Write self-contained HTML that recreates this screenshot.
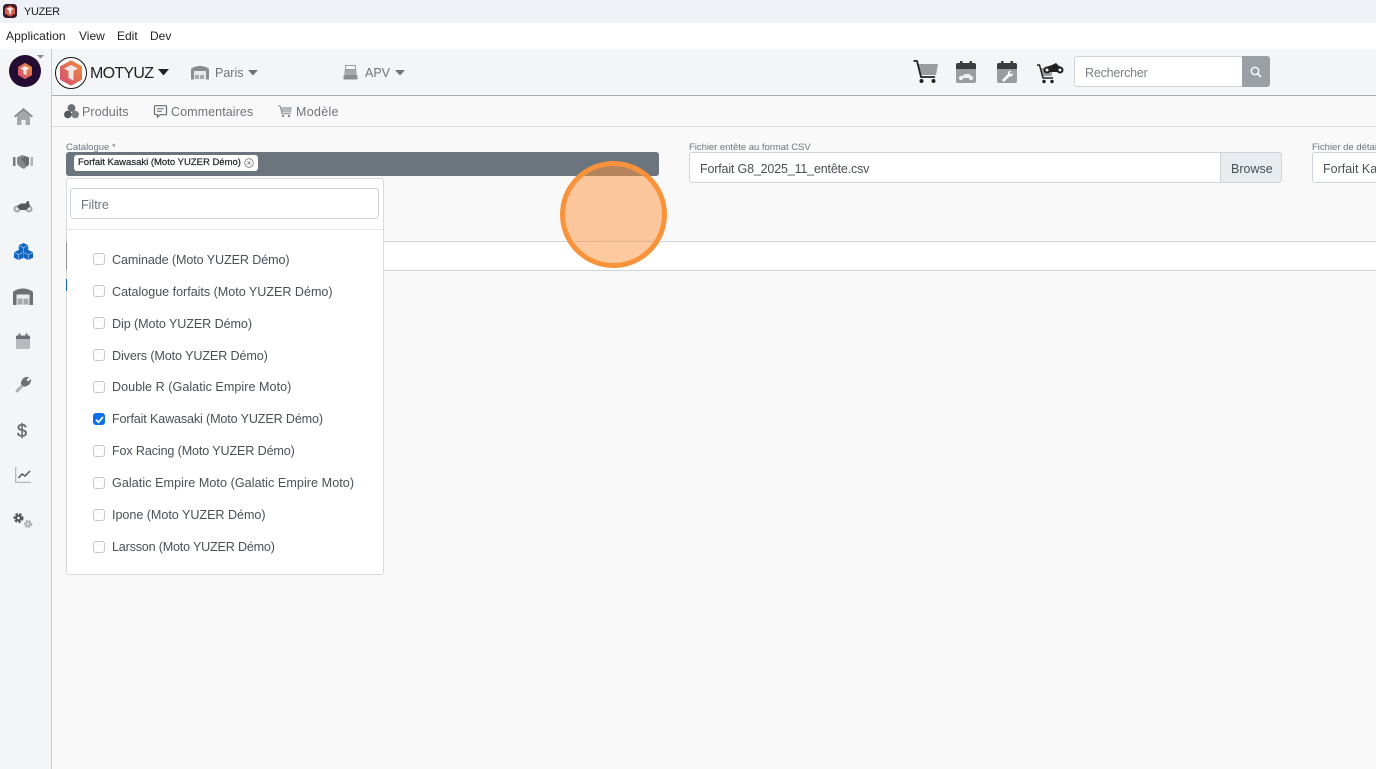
<!DOCTYPE html>
<html lang="fr"><head><meta charset="utf-8"><title>YUZER</title>
<style>
html,body{margin:0;padding:0;width:1376px;height:769px;overflow:hidden;background:#f9f9fa;font-family:"Liberation Sans",sans-serif;color:#495057}
.a{position:absolute;white-space:nowrap}
svg{position:absolute;overflow:visible}
.cb{position:absolute;left:93px;width:10px;height:10px;border:1px solid #c6c8ca;border-radius:3px;background:#fff}
.it{position:absolute;left:112px;font-size:12.6px;line-height:16px;color:#495057;white-space:nowrap}
</style></head><body>
<div class="a" style="left:0;top:0;width:1376px;height:23px;background:#eef2f6"></div>
<svg style="left:2px;top:3px" width="16" height="16" viewBox="0 0 16 16"><rect x="1" y="1" width="14" height="14" rx="3.500" fill="#3a1a28"/><path d="M8 2.500l5 2.700v5.600l-5 2.700-5-2.700V5.200z" fill="#d9604f"/><path d="M4.500 5.800L8 4.200l3.500 1.600L9 7.800v3.500l-2-1V7.800z" fill="#f5e8e6"/></svg>
<div class="a" style="left:24px;top:5px;font-size:11px;letter-spacing:-.3px;line-height:15px;color:#1a1a1a">YUZER</div>
<div class="a" style="left:0;top:23px;width:1376px;height:26px;background:#fff"></div>
<div class="a" style="left:6px;top:29px;font-size:12px;letter-spacing:.08px;line-height:15px;color:#222">Application</div>
<div class="a" style="left:79px;top:29px;font-size:12px;line-height:15px;color:#222">View</div>
<div class="a" style="left:117px;top:29px;font-size:12px;line-height:15px;color:#222">Edit</div>
<div class="a" style="left:150px;top:29px;font-size:12px;line-height:15px;color:#222">Dev</div>

<div class="a" style="left:0;top:49px;width:1376px;height:46px;background:#f4f5f7;border-bottom:1px solid #a9acaf;box-shadow:0 1px 1px #ddd"></div>
<div class="a" style="left:0;top:49px;width:51px;height:720px;background:#f4f5f7;border-right:1px solid #c9cbce"></div>
<div class="a" style="left:52px;top:96px;width:1324px;height:30px;background:#f9f9fa;border-bottom:1px solid #dcdee0"></div>

<svg style="left:9px;top:55px" width="33" height="33" viewBox="0 0 33 33"><defs><linearGradient id="g1" x1="0" y1="1" x2="1" y2="0"><stop offset="0" stop-color="#d64f72"/><stop offset="1" stop-color="#ea8a3c"/></linearGradient></defs><circle cx="16" cy="16" r="16" fill="#250c33"/><path d="M16 9l6 3.500v7L16 23l-6-3.500v-7z" fill="url(#g1)" stroke="url(#g1)" stroke-width="2" stroke-linejoin="round"/><path d="M11.500 13.500L16 11l4.500 2.500-3 1.800v5l-3-1.500v-3.500z" fill="#f5e8e6"/></svg>
<svg style="left:37px;top:55px" width="8" height="4" viewBox="0 0 8 4"><path d="M0 0h7L3.500 3.500z" fill="#888"/></svg>
<svg style="left:55px;top:57px" width="33" height="33" viewBox="0 0 33 33"><circle cx="16" cy="16" r="15.500" fill="#fff" stroke="#111" stroke-width="1"/><path d="M16 5l9.500 5.200v11.600L16 27l-9.500-5.200V10.200z" fill="url(#g1)" stroke="url(#g1)" stroke-width="3" stroke-linejoin="round"/><path d="M9 11.500L16 8l7 3.500-4.500 2.500v9.500L13.500 21v-7z" fill="#f3e6e4"/></svg>
<div class="a" style="left:90px;top:64px;font-size:16px;letter-spacing:-.7px;line-height:19px;color:#222">MOTYUZ</div>
<svg style="left:158px;top:69px" width="11" height="7" viewBox="0 0 11 7"><path d="M0 0h11L5.500 6.500z" fill="#222"/></svg>
<svg style="left:191px;top:65px" width="18" height="15" viewBox="0 0 18 15"><path d="M0 5Q0 3 2 2.500Q9-.5 16 2.500Q18 3 18 5v9.500H0z" fill="#8a8d90"/><rect x="3" y="6" width="12" height="8.500" fill="#e6e7e8"/><rect x="4" y="10" width="4" height="4" fill="#a8abad"/><rect x="9" y="10" width="4" height="4" fill="#a8abad"/></svg>
<div class="a" style="left:215px;top:66px;font-size:12.500px;line-height:15px;color:#6c757d">Paris</div>
<svg style="left:248px;top:70px" width="10" height="6" viewBox="0 0 10 6"><path d="M0 0h10L5 5.500z" fill="#6c757d"/></svg>
<svg style="left:343px;top:65px" width="15" height="15" viewBox="0 0 15 15"><rect x="2.500" y="0.500" width="10" height="4" fill="none" stroke="#9a9da0"/><rect x="1.500" y="5" width="12" height="5" fill="#a5a8ab"/><rect x="0.500" y="10" width="14" height="4.500" rx="1" fill="#8a8d90"/></svg>
<div class="a" style="left:365px;top:66px;font-size:12.500px;line-height:15px;color:#6c757d">APV</div>
<svg style="left:395px;top:70px" width="10" height="6" viewBox="0 0 10 6"><path d="M0 0h10L5 5.500z" fill="#6c757d"/></svg>

<svg style="left:913px;top:60px" width="26" height="24" viewBox="0 0 26 24"><path d="M5 4h20l-2 11H8z" fill="#9a9da0"/><path d="M0.500 1H4l4 16h14" fill="none" stroke="#222" stroke-width="1.800"/><circle cx="8.500" cy="21" r="2" fill="#222"/><circle cx="20.500" cy="21" r="2" fill="#222"/></svg>
<svg style="left:956px;top:60px" width="20" height="23" viewBox="0 0 20 23"><rect x="0" y="8" width="20" height="15" rx="2" fill="#9a9da0"/><path d="M0 9V5a2 2 0 0 1 2-2h16a2 2 0 0 1 2 2v4z" fill="#3a3d40"/><rect x="4" y="1" width="2.500" height="4" fill="#3a3d40"/><rect x="13.500" y="1" width="2.500" height="4" fill="#3a3d40"/><circle cx="5" cy="18" r="2.200" fill="#eee"/><circle cx="15" cy="18" r="2.200" fill="#eee"/><path d="M5 17l4-3h5l2 4H8z" fill="#eee"/></svg>
<svg style="left:997px;top:60px" width="20" height="23" viewBox="0 0 20 23"><rect x="0" y="8" width="20" height="15" rx="2" fill="#9a9da0"/><path d="M0 9V5a2 2 0 0 1 2-2h16a2 2 0 0 1 2 2v4z" fill="#3a3d40"/><rect x="4" y="1" width="2.500" height="4" fill="#3a3d40"/><rect x="13.500" y="1" width="2.500" height="4" fill="#3a3d40"/><path d="M5 20l6-6c-.5-2 1-3.500 3.500-3l-2 2 1.500 1.500 2-1.500c.3 2.500-1.300 3.800-3.300 3.300l-6 5.700z" fill="#fff"/></svg>
<svg style="left:1037px;top:62px" width="27" height="22" viewBox="0 0 27 22"><path d="M3 6h13l-1.500 8H6z" fill="#9a9da0"/><path d="M0 3h2.500l3.500 13h10" fill="none" stroke="#222" stroke-width="1.500"/><circle cx="7" cy="19.500" r="1.700" fill="#222"/><circle cx="15" cy="19.500" r="1.700" fill="#222"/><path d="M9 5l6-2 4-2 3 3 2 1-3 5H10z" fill="#222"/><circle cx="10" cy="8" r="3.500" fill="#222"/><circle cx="10" cy="8" r="1.500" fill="#eee"/><circle cx="23" cy="8" r="3.500" fill="#222"/><circle cx="23" cy="8" r="1.500" fill="#eee"/></svg>

<div class="a" style="left:1074px;top:56px;width:168px;height:29px;background:#fff;border:1px solid #ced4da;border-right:0;border-radius:3px 0 0 3px"></div>
<div class="a" style="left:1085px;top:66px;font-size:12.500px;letter-spacing:-.2px;line-height:15px;color:#7a8087">Rechercher</div>
<div class="a" style="left:1242px;top:56px;width:28px;height:31px;background:#9aa0a6;border-radius:0 3px 3px 0"></div>
<svg style="left:1250px;top:66px" width="12" height="12" viewBox="0 0 12 12"><circle cx="5" cy="5" r="3.700" fill="none" stroke="#fff" stroke-width="1.400"/><path d="M7.800 7.800L11 11" stroke="#fff" stroke-width="1.600"/></svg>

<svg style="left:64px;top:104px" width="15" height="15" viewBox="0 0 15 15"><circle cx="7.500" cy="4" r="3.900" fill="#6c7074"/><circle cx="3.800" cy="10.500" r="3.800" fill="#565a5e"/><circle cx="11.200" cy="10.500" r="3.800" fill="#7a7e82"/></svg>
<div class="a" style="left:82px;top:105px;font-size:12.500px;letter-spacing:.1px;line-height:15px;color:#6c757d">Produits</div>
<svg style="left:154px;top:105px" width="13" height="13" viewBox="0 0 13 13"><path d="M1.500 .7h10a1 1 0 0 1 1 1v7a1 1 0 0 1-1 1H6L3.500 12V9.700h-2a1 1 0 0 1-1-1v-7a1 1 0 0 1 1-1z" fill="none" stroke="#666a6e" stroke-width="1.200"/><path d="M3 3.700h7M3 6.300h5" stroke="#666a6e"/></svg>
<div class="a" style="left:171px;top:105px;font-size:12.500px;letter-spacing:.08px;line-height:15px;color:#6c757d">Commentaires</div>
<svg style="left:278px;top:105px" width="14" height="13" viewBox="0 0 14 13"><path d="M3 2h11l-1 5.500H4z" fill="#b5b8bb"/><path d="M0 .7h2l2 8h8.500" fill="none" stroke="#8a8d90"/><circle cx="5" cy="11" r="1.200" fill="#8a8d90"/><circle cx="11" cy="11" r="1.200" fill="#8a8d90"/></svg>
<div class="a" style="left:296px;top:105px;font-size:12.500px;letter-spacing:.3px;line-height:15px;color:#6c757d">Modèle</div>

<!-- sidebar icons -->
<svg style="left:14px;top:108px" width="19" height="17" viewBox="0 0 19 17"><path d="M3 8L9.500 2.500 16 8v9h-4.500v-5h-4v5H3z" fill="#a5a8ab"/><path d="M9.500 0L19 8.200l-1.100 1.300L9.500 2.600 1.100 9.500 0 8.200z" fill="#85888b"/></svg>
<svg style="left:13px;top:154px" width="20" height="15" viewBox="0 0 20 15"><rect x="0" y="3" width="2.500" height="9" fill="#7a7d80"/><rect x="17.500" y="3" width="2.500" height="9" fill="#b0b3b6"/><path d="M4 3.500L9 1l3 1 4 1.500v7l-5 4.500-4-2-3-3z" fill="#85888b"/><path d="M8 5l4-3 4 1.500v7l-2 2z" fill="#6a6d70"/></svg>
<svg style="left:13px;top:200px" width="20" height="13" viewBox="0 0 20 13"><circle cx="4" cy="9" r="3.500" fill="#a5a8ab"/><circle cx="4" cy="9" r="1.500" fill="#e6e7e8"/><circle cx="16" cy="9" r="3.500" fill="#a5a8ab"/><circle cx="16" cy="9" r="1.500" fill="#e6e7e8"/><path d="M4 6l4-2.500h5L14 1l1.500 0 1.500 5-4 4H7z" fill="#55585b"/></svg>
<svg style="left:14px;top:243px" width="19" height="17" viewBox="0 0 19 17"><g fill="#1266c4"><path d="M9.500 0l4.700 2.200v5.300l-4.700 2.200-4.700-2.200V2.200z"/><path d="M4.700 7l4.700 2.200v5.600L4.700 17 0 14.800V9.200z"/><path d="M14.300 7L19 9.200v5.600L14.300 17l-4.700-2.200V9.200z"/></g><g stroke="#9cc2ee" stroke-width=".7" fill="none"><path d="M4.800 2.400l4.700 2.200 4.700-2.200M9.500 4.600V9M0 9.400l4.700 2.200 4.700-2.200M4.700 11.600V17M9.600 9.400l4.700 2.200L19 9.400M14.300 11.600V17"/></g></svg>
<svg style="left:13px;top:288px" width="20" height="17" viewBox="0 0 20 17"><path d="M0 5Q0 3 2 2.500Q10-1.500 18 2.500Q20 3 20 5v12H0z" fill="#6c7074"/><rect x="3.500" y="6.500" width="13" height="10.500" fill="#eceded"/><rect x="4.500" y="10.500" width="5" height="6" fill="#a5a8ab"/><rect x="10.500" y="10.500" width="5" height="6" fill="#a5a8ab"/></svg>
<svg style="left:16px;top:333px" width="14" height="16" viewBox="0 0 14 16"><rect x="0" y="5" width="14" height="11" rx="1" fill="#b8babd"/><path d="M0 6V3.500a1 1 0 0 1 1-1h12a1 1 0 0 1 1 1V6z" fill="#6c7074"/><rect x="2.500" y="0.500" width="2" height="3" fill="#6c7074"/><rect x="9.500" y="0.500" width="2" height="3" fill="#6c7074"/></svg>
<svg style="left:15px;top:376px" width="17" height="17" viewBox="0 0 17 17"><path d="M6 8.500C5.500 4 9 0 14 1l-2.500 2.800 1.700 1.700L16 3c.8 4.500-3.500 8-7.500 7.500z" fill="#6c7074"/><path d="M6.500 8.500l2 2L3 16.300c-1 1-3.200-.8-2.200-2.200z" fill="#b0b3b6"/></svg>
<div class="a" style="left:17px;top:421px;font-size:18px;line-height:20px;color:#6c7074;-webkit-text-stroke:.5px #6c7074">$</div>
<svg style="left:15px;top:467px" width="17" height="16" viewBox="0 0 17 16"><path d="M.7 0v15.300H16" fill="none" stroke="#b0b3b6" stroke-width="1.200"/><path d="M3.500 11l3.500-4 3 2 5-5" fill="none" stroke="#55585b" stroke-width="1.500"/></svg>
<svg style="left:12px;top:512px" width="22" height="17" viewBox="0 0 22 17"><circle cx="6.500" cy="6" r="3.400" fill="none" stroke="#55585b" stroke-width="3.200" stroke-dasharray="2.200 1.100"/><circle cx="6.500" cy="6" r="3.300" fill="#55585b"/><circle cx="6.500" cy="6" r="1.300" fill="#f4f5f7"/><circle cx="16" cy="12" r="2.800" fill="none" stroke="#b0b3b6" stroke-width="2.800" stroke-dasharray="1.800 .9"/><circle cx="16" cy="12" r="2.800" fill="#b0b3b6"/><circle cx="16" cy="12" r="1" fill="#f4f5f7"/></svg>

<!-- form -->
<div class="a" style="left:66px;top:142px;font-size:9.500px;line-height:11px;color:#6c757d">Catalogue *</div>
<div class="a" style="left:66px;top:152px;width:593px;height:24px;background:#6c757d;border-radius:3px"></div>
<div class="a" style="left:74px;top:155px;width:184px;height:16px;background:#fff;border-radius:3px"></div>
<div class="a" style="left:78px;top:156px;font-size:9.500px;line-height:14px;color:#212529;-webkit-text-stroke:.2px #212529">Forfait Kawasaki (Moto YUZER Démo)</div>
<svg style="left:244px;top:158px" width="10" height="10" viewBox="0 0 10 10"><circle cx="5" cy="5" r="4.300" fill="none" stroke="#777" stroke-width=".8"/><path d="M3.400 3.400l3.200 3.200M6.600 3.400L3.400 6.600" stroke="#777" stroke-width=".8"/></svg>

<div class="a" style="left:689px;top:142px;font-size:9.500px;letter-spacing:-.03px;line-height:11px;color:#6c757d">Fichier entête au format CSV</div>
<div class="a" style="left:689px;top:152px;width:531px;height:29px;background:#fff;border:1px solid #ced4da;border-right:0;border-radius:3px 0 0 3px"></div>
<div class="a" style="left:700px;top:162px;font-size:12.500px;letter-spacing:-.17px;line-height:15px;color:#495057">Forfait G8_2025_11_entête.csv</div>
<div class="a" style="left:1220px;top:152px;width:60px;height:29px;background:#e9ecef;border:1px solid #ced4da;border-radius:0 3px 3px 0"></div>
<div class="a" style="left:1231px;top:162px;font-size:12.500px;line-height:15px;color:#495057">Browse</div>
<div class="a" style="left:1312px;top:142px;font-size:9.500px;line-height:11px;color:#6c757d">Fichier de détail</div>
<div class="a" style="left:1312px;top:152px;width:70px;height:29px;background:#fff;border:1px solid #ced4da;border-radius:3px"></div>
<div class="a" style="left:1323px;top:162px;font-size:12.500px;line-height:15px;color:#495057">Forfait Ka</div>

<div class="a" style="left:66px;top:241px;width:1310px;height:28px;background:#fff;border-top:1px solid #ced4da;border-bottom:1px solid #ced4da"></div>

<!-- dropdown -->
<div class="a" style="left:66px;top:178px;width:316px;height:395px;background:#fff;border:1px solid #d8dadc;border-radius:3px"></div>
<div class="a" style="left:66px;top:242px;width:1px;height:28px;background:#8f9498"></div>
<div class="a" style="left:66px;top:279px;width:1px;height:12px;background:#1266c4"></div>
<div class="a" style="left:70px;top:188px;width:307px;height:29px;background:#fff;border:1px solid #ced4da;border-radius:3px"></div>
<div class="a" style="left:81px;top:198px;font-size:12.500px;line-height:15px;color:#6c757d">Filtre</div>
<div class="a" style="left:67px;top:229px;width:316px;height:1px;background:#e4e6e8"></div>

<div class="cb" style="top:253px"></div><div class="it" style="top:252px;letter-spacing:-.11px">Caminade (Moto YUZER Démo)</div>
<div class="cb" style="top:285px"></div><div class="it" style="top:284px;letter-spacing:-.03px">Catalogue forfaits (Moto YUZER Démo)</div>
<div class="cb" style="top:317px"></div><div class="it" style="top:316px;letter-spacing:-.09px">Dip (Moto YUZER Démo)</div>
<div class="cb" style="top:349px"></div><div class="it" style="top:348px;letter-spacing:-.12px">Divers (Moto YUZER Démo)</div>
<div class="cb" style="top:381px"></div><div class="it" style="top:379px;letter-spacing:.03px">Double R (Galatic Empire Moto)</div>
<div class="cb" style="top:413px;background:#0b6fe8;border-color:#0b6fe8"></div>
<svg style="left:94px;top:414px" width="11" height="11" viewBox="0 0 11 11"><path d="M2 5.800l2.500 2.400L9 3" fill="none" stroke="#fff" stroke-width="1.800"/></svg>
<div class="it" style="top:411px;letter-spacing:-.15px">Forfait Kawasaki (Moto YUZER Démo)</div>
<div class="cb" style="top:445px"></div><div class="it" style="top:443px;letter-spacing:-.14px">Fox Racing (Moto YUZER Démo)</div>
<div class="cb" style="top:477px"></div><div class="it" style="top:475px;letter-spacing:.05px">Galatic Empire Moto (Galatic Empire Moto)</div>
<div class="cb" style="top:509px"></div><div class="it" style="top:507px;letter-spacing:-.04px">Ipone (Moto YUZER Démo)</div>
<div class="cb" style="top:541px"></div><div class="it" style="top:539px;letter-spacing:-.2px">Larsson (Moto YUZER Démo)</div>

<!-- orange circle -->
<div class="a" style="left:560px;top:161px;width:107px;height:107px;box-sizing:border-box;border-radius:50%;background:rgba(253,148,62,.5);border:5px solid #f9933b"></div>
</body></html>
